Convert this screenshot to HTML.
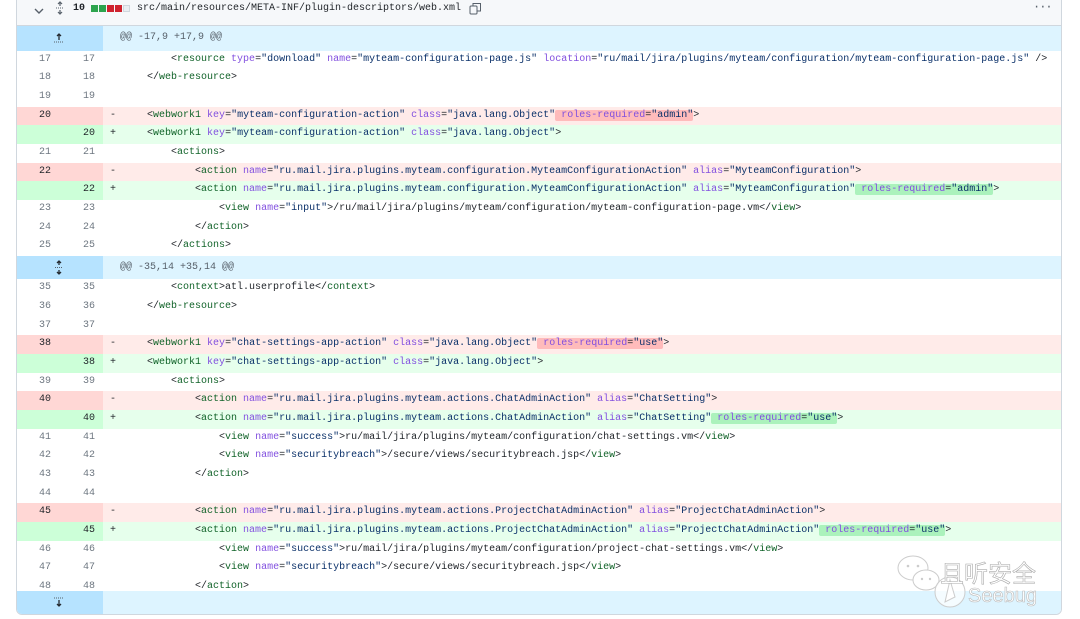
<!DOCTYPE html>
<html><head><meta charset="utf-8"><style>
*{margin:0;padding:0;box-sizing:border-box}
body{width:1080px;height:619px;background:#fff;position:relative;overflow:hidden;font-family:"Liberation Mono",monospace;font-size:10px;color:#1f2328}
.box{position:absolute;left:16px;top:-6px;width:1046px;height:621px;border:1px solid #d0d7de;border-radius:6px;overflow:hidden}
.hdr{position:absolute;left:0;top:0;width:100%;height:31px;background:#f6f8fa;border-bottom:1px solid #d0d7de}
.row{position:absolute;left:0;width:100%;height:18.67px;line-height:18.67px;white-space:pre}
.n1,.n2{position:absolute;top:0;width:40px;text-align:center;color:#6e7781}
.n1{left:8px}.n2{left:52px}
.g{position:absolute;left:0;top:0;width:86px;height:100%}
.s{position:absolute;left:93px;top:0}
.c{position:absolute;left:106px;top:0}
.del{background:#ffebe9}.del .g{background:#ffd7d5}
.add{background:#e6ffec}.add .g{background:#ccffd8}
.del .n1,.del .n2,.add .n1,.add .n2{color:#1f2328}
.hunk{background:#ddf4ff;color:#57606a}.hunk .g{background:#b6e3ff}
.t{color:#116329}.a{color:#8250df}.v{color:#0a3069}
.hd{background:rgba(255,129,130,.45);border-radius:2px}
.ha{background:#abf2bc;border-radius:2px}
.sq{position:absolute;top:10px;width:7px;height:7px}
</style></head><body>
<div class="box">
<div class="hdr">
<svg style="position:absolute;left:17px;top:12px" width="10" height="8" viewBox="0 0 10 8"><path d="M1 2l4 4 4-4" stroke="#57606a" stroke-width="1.4" fill="none"/></svg>
<svg style="position:absolute;left:38px;top:6px" width="10" height="14" viewBox="0 0 10 14"><path d="M5 1v4M3 3l2-2 2 2M5 9v4M3 11l2 2 2-2" stroke="#57606a" stroke-width="1.2" fill="none"/><path d="M1 7h8" stroke="#57606a" stroke-dasharray="1 1"/></svg>
<span style="position:absolute;left:56px;top:8px;color:#1f2328;font-weight:bold">10</span>
<span class="sq" style="left:74px;background:#2da44e"></span>
<span class="sq" style="left:82px;background:#2da44e"></span>
<span class="sq" style="left:90px;background:#cf222e"></span>
<span class="sq" style="left:98px;background:#cf222e"></span>
<span class="sq" style="left:106px;background:#eaeef2;border:1px solid #d0d7de"></span>
<span style="position:absolute;left:120px;top:8px;color:#1f2328">src/main/resources/META-INF/plugin-descriptors/web.xml</span>
<svg style="position:absolute;left:452px;top:7px" width="13" height="13" viewBox="0 0 13 13"><rect x="1" y="4" width="7" height="8" rx="1" stroke="#57606a" fill="none"/><path d="M4 4V1.5h7.5V9H8" stroke="#57606a" fill="none"/></svg>
<span style="position:absolute;left:1016px;top:5px;color:#57606a;font-size:12px;letter-spacing:-1px">···</span>
</div>
<div class="row hunk" style="top:31px;height:24.5px;line-height:24.5px"><div class="g"><svg style="position:absolute;left:36px;top:6px" width="12" height="12" viewBox="0 0 12 12"><path d="M6 2v6M4 4l2-2 2 2" stroke="#24292f" stroke-width="1.3" fill="none"/><path d="M1 10h10" stroke="#57606a" stroke-dasharray="1 1"/></svg></div><span class="c" style="left:103px">@@ -17,9 +17,9 @@</span></div>
<div class="row" style="top:55.5px"><span class="n1">17</span><span class="n2">17</span><span class="c">        &lt;<span class="t">resource</span> <span class="a">type</span>=<span class="v">"download"</span> <span class="a">name</span>=<span class="v">"myteam-configuration-page.js"</span> <span class="a">location</span>=<span class="v">"ru/mail/jira/plugins/myteam/configuration/myteam-configuration-page.js"</span> /&gt;</span></div>
<div class="row" style="top:74.2px"><span class="n1">18</span><span class="n2">18</span><span class="c">    &lt;/<span class="t">web-resource</span>&gt;</span></div>
<div class="row" style="top:92.8px"><span class="n1">19</span><span class="n2">19</span></div>
<div class="row del" style="top:111.5px"><div class="g"></div><span class="n1">20</span><span class="s">-</span><span class="c">    &lt;<span class="t">webwork1</span> <span class="a">key</span>=<span class="v">"myteam-configuration-action"</span> <span class="a">class</span>=<span class="v">"java.lang.Object"</span><span class="hd"> <span class="a">roles-required</span>=<span class="v">"admin"</span></span>&gt;</span></div>
<div class="row add" style="top:130.2px"><div class="g"></div><span class="n2">20</span><span class="s">+</span><span class="c">    &lt;<span class="t">webwork1</span> <span class="a">key</span>=<span class="v">"myteam-configuration-action"</span> <span class="a">class</span>=<span class="v">"java.lang.Object"</span>&gt;</span></div>
<div class="row" style="top:148.8px"><span class="n1">21</span><span class="n2">21</span><span class="c">        &lt;<span class="t">actions</span>&gt;</span></div>
<div class="row del" style="top:167.5px"><div class="g"></div><span class="n1">22</span><span class="s">-</span><span class="c">            &lt;<span class="t">action</span> <span class="a">name</span>=<span class="v">"ru.mail.jira.plugins.myteam.configuration.MyteamConfigurationAction"</span> <span class="a">alias</span>=<span class="v">"MyteamConfiguration"</span>&gt;</span></div>
<div class="row add" style="top:186.2px"><div class="g"></div><span class="n2">22</span><span class="s">+</span><span class="c">            &lt;<span class="t">action</span> <span class="a">name</span>=<span class="v">"ru.mail.jira.plugins.myteam.configuration.MyteamConfigurationAction"</span> <span class="a">alias</span>=<span class="v">"MyteamConfiguration"</span><span class="ha"> <span class="a">roles-required</span>=<span class="v">"admin"</span></span>&gt;</span></div>
<div class="row" style="top:204.8px"><span class="n1">23</span><span class="n2">23</span><span class="c">                &lt;<span class="t">view</span> <span class="a">name</span>=<span class="v">"input"</span>&gt;/ru/mail/jira/plugins/myteam/configuration/myteam-configuration-page.vm&lt;/<span class="t">view</span>&gt;</span></div>
<div class="row" style="top:223.5px"><span class="n1">24</span><span class="n2">24</span><span class="c">            &lt;/<span class="t">action</span>&gt;</span></div>
<div class="row" style="top:242.2px"><span class="n1">25</span><span class="n2">25</span><span class="c">        &lt;/<span class="t">actions</span>&gt;</span></div>
<div class="row hunk" style="top:260.8px;height:23.5px;line-height:23.5px"><div class="g"><svg style="position:absolute;left:37px;top:4px" width="10" height="15" viewBox="0 0 10 15"><path d="M5 1v4M3 3l2-2 2 2M5 10v4M3 12l2 2 2-2" stroke="#24292f" stroke-width="1.3" fill="none"/><path d="M1 7.5h8" stroke="#57606a" stroke-dasharray="1 1"/></svg></div><span class="c" style="left:103px">@@ -35,14 +35,14 @@</span></div>
<div class="row" style="top:284.3px"><span class="n1">35</span><span class="n2">35</span><span class="c">        &lt;<span class="t">context</span>&gt;atl.userprofile&lt;/<span class="t">context</span>&gt;</span></div>
<div class="row" style="top:303px"><span class="n1">36</span><span class="n2">36</span><span class="c">    &lt;/<span class="t">web-resource</span>&gt;</span></div>
<div class="row" style="top:321.6px"><span class="n1">37</span><span class="n2">37</span></div>
<div class="row del" style="top:340.3px"><div class="g"></div><span class="n1">38</span><span class="s">-</span><span class="c">    &lt;<span class="t">webwork1</span> <span class="a">key</span>=<span class="v">"chat-settings-app-action"</span> <span class="a">class</span>=<span class="v">"java.lang.Object"</span><span class="hd"> <span class="a">roles-required</span>=<span class="v">"use"</span></span>&gt;</span></div>
<div class="row add" style="top:359px"><div class="g"></div><span class="n2">38</span><span class="s">+</span><span class="c">    &lt;<span class="t">webwork1</span> <span class="a">key</span>=<span class="v">"chat-settings-app-action"</span> <span class="a">class</span>=<span class="v">"java.lang.Object"</span>&gt;</span></div>
<div class="row" style="top:377.6px"><span class="n1">39</span><span class="n2">39</span><span class="c">        &lt;<span class="t">actions</span>&gt;</span></div>
<div class="row del" style="top:396.3px"><div class="g"></div><span class="n1">40</span><span class="s">-</span><span class="c">            &lt;<span class="t">action</span> <span class="a">name</span>=<span class="v">"ru.mail.jira.plugins.myteam.actions.ChatAdminAction"</span> <span class="a">alias</span>=<span class="v">"ChatSetting"</span>&gt;</span></div>
<div class="row add" style="top:415px"><div class="g"></div><span class="n2">40</span><span class="s">+</span><span class="c">            &lt;<span class="t">action</span> <span class="a">name</span>=<span class="v">"ru.mail.jira.plugins.myteam.actions.ChatAdminAction"</span> <span class="a">alias</span>=<span class="v">"ChatSetting"</span><span class="ha"> <span class="a">roles-required</span>=<span class="v">"use"</span></span>&gt;</span></div>
<div class="row" style="top:433.6px"><span class="n1">41</span><span class="n2">41</span><span class="c">                &lt;<span class="t">view</span> <span class="a">name</span>=<span class="v">"success"</span>&gt;ru/mail/jira/plugins/myteam/configuration/chat-settings.vm&lt;/<span class="t">view</span>&gt;</span></div>
<div class="row" style="top:452.3px"><span class="n1">42</span><span class="n2">42</span><span class="c">                &lt;<span class="t">view</span> <span class="a">name</span>=<span class="v">"securitybreach"</span>&gt;/secure/views/securitybreach.jsp&lt;/<span class="t">view</span>&gt;</span></div>
<div class="row" style="top:471px"><span class="n1">43</span><span class="n2">43</span><span class="c">            &lt;/<span class="t">action</span>&gt;</span></div>
<div class="row" style="top:489.6px"><span class="n1">44</span><span class="n2">44</span></div>
<div class="row del" style="top:508.3px"><div class="g"></div><span class="n1">45</span><span class="s">-</span><span class="c">            &lt;<span class="t">action</span> <span class="a">name</span>=<span class="v">"ru.mail.jira.plugins.myteam.actions.ProjectChatAdminAction"</span> <span class="a">alias</span>=<span class="v">"ProjectChatAdminAction"</span>&gt;</span></div>
<div class="row add" style="top:527px"><div class="g"></div><span class="n2">45</span><span class="s">+</span><span class="c">            &lt;<span class="t">action</span> <span class="a">name</span>=<span class="v">"ru.mail.jira.plugins.myteam.actions.ProjectChatAdminAction"</span> <span class="a">alias</span>=<span class="v">"ProjectChatAdminAction"</span><span class="ha"> <span class="a">roles-required</span>=<span class="v">"use"</span></span>&gt;</span></div>
<div class="row" style="top:545.6px"><span class="n1">46</span><span class="n2">46</span><span class="c">                &lt;<span class="t">view</span> <span class="a">name</span>=<span class="v">"success"</span>&gt;ru/mail/jira/plugins/myteam/configuration/project-chat-settings.vm&lt;/<span class="t">view</span>&gt;</span></div>
<div class="row" style="top:564.3px"><span class="n1">47</span><span class="n2">47</span><span class="c">                &lt;<span class="t">view</span> <span class="a">name</span>=<span class="v">"securitybreach"</span>&gt;/secure/views/securitybreach.jsp&lt;/<span class="t">view</span>&gt;</span></div>
<div class="row" style="top:583px"><span class="n1">48</span><span class="n2">48</span><span class="c">            &lt;/<span class="t">action</span>&gt;</span></div>
<div class="row hunk" style="top:596px;height:25px"><div class="g"><svg style="position:absolute;left:36px;top:5px" width="12" height="12" viewBox="0 0 12 12"><path d="M1 2h10" stroke="#57606a" stroke-dasharray="1 1"/><path d="M6 4v6M4 8l2 2 2-2" stroke="#24292f" stroke-width="1.3" fill="none"/></svg></div></div>
</div>
<svg style="position:absolute;left:888px;top:550px" width="180" height="62" viewBox="0 0 180 62">
<ellipse cx="25" cy="18" rx="15" ry="12" fill="#fff" stroke="#ccc"/><circle cx="20" cy="16" r="1.3" fill="#ccc"/><circle cx="30" cy="16" r="1.3" fill="#ccc"/>
<ellipse cx="38" cy="30" rx="13" ry="10" fill="#fff" stroke="#ccc"/><circle cx="34" cy="29" r="1.2" fill="#ccc"/><circle cx="42" cy="29" r="1.2" fill="#ccc"/>
<circle cx="62" cy="42" r="15" fill="#fff" fill-opacity=".7" stroke="#ccc"/><path d="M62 30l-5 22 10-5z" fill="#fff" stroke="#ccc"/>
<text x="52" y="32" font-family="Noto Sans CJK SC,sans-serif" font-size="24" fill="#fff" stroke="#aaa" stroke-width=".6">且听安全</text>
<text x="80" y="52" font-family="Liberation Sans,sans-serif" font-size="20" fill="#fff" stroke="#bbb" stroke-width=".6">Seebug</text>
</svg>
</body></html>
